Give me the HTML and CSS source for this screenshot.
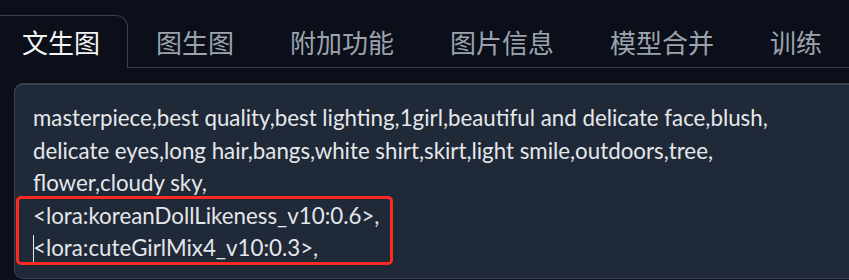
FILE: index.html
```html
<!DOCTYPE html>
<html lang="zh">
<head>
  <meta charset="UTF-8" />
  <meta name="viewport" content="width=device-width, initial-scale=1.0" />
  <title>txt2img</title>
  <link rel="stylesheet" href="styles.css">
</head>
<body>
  <div class="tabs">
    <div class="tab-nav">
      <button class="tab selected">文生图</button>
      <button class="tab">图生图</button>
      <button class="tab">附加功能</button>
      <button class="tab">图片信息</button>
      <button class="tab">模型合并</button>
      <button class="tab">训练</button>
    </div>

    <div class="panel">
      <div class="prompt">
        masterpiece,best quality,best lighting,1girl,beautiful and delicate face,blush,<br>
        delicate eyes,long hair,bangs,white shirt,skirt,light smile,outdoors,tree,<br>
        flower,cloudy sky,<br>
        &lt;lora:koreanDollLikeness_v10:0.6&gt;,<br>
        <span class="caret"></span>&lt;lora:cuteGirlMix4_v10:0.3&gt;,
        <div class="mark"></div>
      </div>
    </div>
  </div>
</body>
</html>
```

FILE: styles.css
```css
body {
  margin: 0;
  background: #0b0f19;
  color: #e5e7eb;
  font-family: 'Noto Sans CJK SC', sans-serif;
  overflow: hidden;
}
.tabs {
  padding-top: 15px;
}
.tab-nav {
  display: flex;
  margin-left: -6px;
  border-bottom: 1px solid #374151;
  height: 52px;
}
.tab {
  flex-shrink: 0;
  white-space: nowrap;
  font-family: 'Noto Sans CJK SC', sans-serif;
  font-size: 26px;
  color: #9ca3af;
  background: none;
  border: 1px solid transparent;
  border-bottom: none;
  padding: 0 27px;
  height: 53px;
  line-height: 50px;
  cursor: pointer;
}
.tab.selected {
  color: #f3f4f6;
  background: #0b0f19;
  border-color: #374151;
  border-radius: 0 12px 0 0;
}
.panel {
  padding: 15px 0 0 14px;
}
.prompt {
  position: relative;
  width: 900px;
  height: 196px;
  background: #1f2937;
  border: 1px solid #374151;
  border-top-width: 2px;
  border-right: none;
  border-radius: 9px 0 0 9px;
  padding: 17px 18px;
  box-sizing: border-box;
  font-family: 'Lato', sans-serif;
  font-size: 22.3px;
  line-height: 32.5px;
  color: #e5e7eb;
  white-space: nowrap;
}
.caret {
  display: inline-block;
  width: 0;
  height: 28px;
  border-left: 1px solid #e5e7eb;
  vertical-align: -7px;
  margin-right: -1px;
}
.mark {
  position: absolute;
  left: 1px;
  top: 111px;
  width: 377px;
  height: 69px;
  border: 3px solid #ff2a1f;
  border-radius: 5px;
  box-sizing: border-box;
}
```
